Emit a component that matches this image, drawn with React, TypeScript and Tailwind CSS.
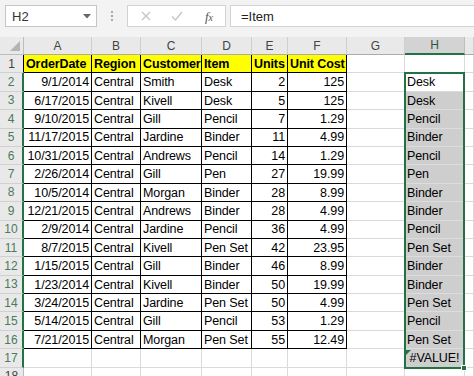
import React from "react";

const GRID = "grid grid-cols-[24px_68px_49px_61px_50px_36px_59px_58px_60px_1fr]";

const data: [string, string, string, string, string, string, string][] = [
  ["9/1/2014", "Central", "Smith", "Desk", "2", "125", "Desk"],
  ["6/17/2015", "Central", "Kivell", "Desk", "5", "125", "Desk"],
  ["9/10/2015", "Central", "Gill", "Pencil", "7", "1.29", "Pencil"],
  ["11/17/2015", "Central", "Jardine", "Binder", "11", "4.99", "Binder"],
  ["10/31/2015", "Central", "Andrews", "Pencil", "14", "1.29", "Pencil"],
  ["2/26/2014", "Central", "Gill", "Pen", "27", "19.99", "Pen"],
  ["10/5/2014", "Central", "Morgan", "Binder", "28", "8.99", "Binder"],
  ["12/21/2015", "Central", "Andrews", "Binder", "28", "4.99", "Binder"],
  ["2/9/2014", "Central", "Jardine", "Pencil", "36", "4.99", "Pencil"],
  ["8/7/2015", "Central", "Kivell", "Pen Set", "42", "23.95", "Pen Set"],
  ["1/15/2015", "Central", "Gill", "Binder", "46", "8.99", "Binder"],
  ["1/23/2014", "Central", "Kivell", "Binder", "50", "19.99", "Binder"],
  ["3/24/2015", "Central", "Jardine", "Pen Set", "50", "4.99", "Pen Set"],
  ["5/14/2015", "Central", "Gill", "Pencil", "53", "1.29", "Pencil"],
  ["7/21/2015", "Central", "Morgan", "Pen Set", "55", "12.49", "Pen Set"],
];

const font = { fontFamily: "'Liberation Sans', Arial, sans-serif" };

function Cell({
  text = "",
  align = "left",
  table = false,
  bold = false,
  yellow = false,
  shaded = false,
  center = false,
}: {
  text?: string;
  align?: "left" | "right";
  table?: boolean;
  bold?: boolean;
  yellow?: boolean;
  shaded?: boolean;
  center?: boolean;
}) {
  const border = table
    ? "border-black"
    : shaded
    ? "border-[#dcdcdc]"
    : "border-[#dadada]";
  const bg = yellow ? "bg-[#ffff00]" : shaded ? "bg-[#cecece]" : "bg-white";
  const just = center
    ? "justify-center"
    : align === "right"
    ? "justify-end pr-[2px]"
    : "justify-start pl-[2px]";
  return (
    <div
      className={`flex items-end overflow-hidden whitespace-nowrap border-r border-b pb-[2px] text-[12.5px] tracking-[-0.1px] leading-none text-black ${border} ${bg} ${just} ${
        bold ? "font-bold" : ""
      }`}
    >
      {text}
    </div>
  );
}

function RowHeader({ n, selected }: { n: number; selected: boolean }) {
  return (
    <div
      className={`flex items-center justify-center bg-[#e9e9e9] border-b border-[#d0d0d0] text-[12px] leading-none ${
        selected
          ? "border-r-2 border-r-[#217346] text-[#4b7a5c]"
          : n === 1
          ? "border-r border-r-black text-[#444]"
          : "border-r border-r-[#bdbdbd] text-[#444]"
      }`}
    >
      {n}
    </div>
  );
}

export default function App() {
  const letters = ["A", "B", "C", "D", "E", "F", "G", "H", ""];
  return (
    <div className="w-[474px] h-[376px] overflow-hidden bg-white" style={font}>
      {/* Formula bar */}
      <div className="h-[37px] bg-[#f3f3f3] flex items-start pt-[5px]">
        <div className="ml-[5px] w-[92px] h-[22px] bg-white border border-[#c6c6c6] flex items-center justify-between pl-[6px] pr-[5px]">
          <span className="text-[13px] text-[#333] leading-none">H2</span>
          <svg width="8" height="5" viewBox="0 0 8 5">
            <path d="M0 0 L8 0 L4 4.5 Z" fill="#666" />
          </svg>
        </div>
        <div className="w-[30px] h-[22px] flex flex-col items-center justify-center gap-[2px]">
          <span className="w-[2px] h-[2px] bg-[#a8a8a8]" />
          <span className="w-[2px] h-[2px] bg-[#a8a8a8]" />
          <span className="w-[2px] h-[2px] bg-[#a8a8a8]" />
        </div>
        <div className="w-[99px] h-[22px] bg-white border border-[#d2d2d2] flex items-center">
          <div className="w-[32px] flex justify-center pl-[3px]">
            <svg width="10" height="10" viewBox="0 0 10 10">
              <path d="M1 1 L9 9 M9 1 L1 9" stroke="#c4c4c4" strokeWidth="1.3" />
            </svg>
          </div>
          <div className="w-[30px] flex justify-center pl-[3px]">
            <svg width="12" height="10" viewBox="0 0 12 10">
              <path d="M1 5.5 L4.5 9 L11 1" stroke="#c4c4c4" strokeWidth="1.3" fill="none" />
            </svg>
          </div>
          <div className="flex-1 flex justify-center pl-[3px]">
            <span
              className="text-[13px] italic text-[#555] leading-none"
              style={{ fontFamily: "'Liberation Serif', 'DejaVu Serif', serif" }}
            >
              f<span className="text-[10px]">x</span>
            </span>
          </div>
        </div>
        <div className="ml-[4px] flex-1 h-[22px] bg-white border border-r-0 border-[#d2d2d2] flex items-center pl-[10px]">
          <span className="text-[13px] text-[#222] leading-none">=Item</span>
        </div>
      </div>

      {/* Sheet */}
      <div className="relative">
        {/* Column header */}
        <div className={`${GRID} h-[18px]`}>
          <div className="relative bg-[#e9e9e9] border-r border-b border-[#bdbdbd]">
            <svg className="absolute right-[3px] bottom-[3px]" width="10" height="10" viewBox="0 0 10 10">
              <path d="M10 0 L10 10 L0 10 Z" fill="#b4b4b4" />
            </svg>
          </div>
          {letters.map((l, i) => (
            <div
              key={i}
              className={`flex items-center justify-center text-[12px] leading-none ${
                l === "H"
                  ? "bg-[#d3d3d3] border-b-2 border-b-[#217346] border-r border-r-[#bdbdbd] text-[#2a5a3b]"
                  : "bg-[#e9e9e9] border-b border-b-[#ababab] border-r border-r-[#cfcfcf] text-[#444]"
              }`}
            >
              {l}
            </div>
          ))}
        </div>

        {/* Row 1 */}
        <div className={`${GRID} h-[18.4px]`}>
          <RowHeader n={1} selected={false} />
          <Cell text="OrderDate" table bold yellow />
          <Cell text="Region" table bold yellow />
          <Cell text="Customer" table bold yellow />
          <Cell text="Item" table bold yellow />
          <Cell text="Units" table bold yellow />
          <Cell text="Unit Cost" table bold yellow />
          <Cell />
          <Cell />
          <Cell />
        </div>

        {data.map((r, i) => (
          <div key={i} className={`${GRID} h-[18.4px]`}>
            <RowHeader n={i + 2} selected />
            <Cell text={r[0]} align="right" table />
            <Cell text={r[1]} table />
            <Cell text={r[2]} table />
            <Cell text={r[3]} table />
            <Cell text={r[4]} align="right" table />
            <Cell text={r[5]} align="right" table />
            <Cell />
            <Cell text={r[6]} shaded={i > 0} />
            <Cell />
          </div>
        ))}

        {/* Row 17 */}
        <div className={`${GRID} h-[18.4px]`}>
          <RowHeader n={17} selected />
          <Cell />
          <Cell />
          <Cell />
          <Cell />
          <Cell />
          <Cell />
          <Cell />
          <Cell text="#VALUE!" shaded center />
          <Cell />
        </div>

        {/* Row 18 */}
        <div className={`${GRID} h-[18.4px]`}>
          <RowHeader n={18} selected={false} />
          <Cell />
          <Cell />
          <Cell />
          <Cell />
          <Cell />
          <Cell />
          <Cell />
          <Cell />
          <Cell />
        </div>

        {/* Error indicator triangle on H17 */}
        <svg className="absolute left-[406px] top-[313.4px]" width="5" height="5" viewBox="0 0 5 5">
          <path d="M0 0 L5 0 L0 5 Z" fill="#217346" />
        </svg>

        {/* Selection border H2:H17 */}
        <div className="absolute left-[404px] top-[35.4px] w-[61px] h-[296.4px] border-2 border-[#217346] pointer-events-none" />
        {/* Fill handle */}
        <div className="absolute left-[461px] top-[328px] w-[6px] h-[6px] bg-[#217346] border border-white" />
      </div>
    </div>
  );
}
